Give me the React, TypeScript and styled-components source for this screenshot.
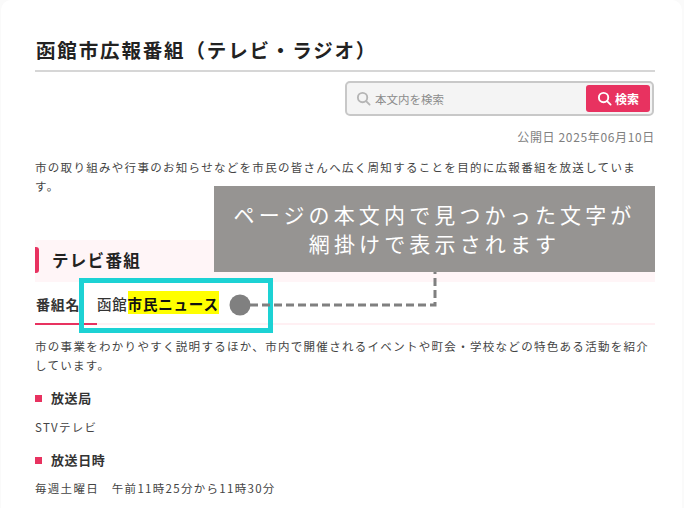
import React from 'react';
import styled, { createGlobalStyle } from 'styled-components';

const GlobalStyle = createGlobalStyle`
  html, body { margin: 0; padding: 0; background: #fafafa; }
  body {
    width: 684px;
    height: 508px;
    overflow: hidden;
    font-family: "Noto Sans CJK JP", "Noto Sans", sans-serif;
    color: #333;
  }
`;

const Stage = styled.div`
  position: relative;
  width: 684px;
  height: 508px;
  overflow: hidden;
`;

const Card = styled.main`
  box-sizing: border-box;
  width: 681px;
  height: 520px;
  margin-left: 1px;
  padding: 35px 27px 0 34px;
  background: #fff;
  border-radius: 10px 10px 0 0;
`;

const PageTitle = styled.h1`
  margin: 0;
  height: 35px;
  padding-left: 1px;
  border-bottom: 2px solid #d6d6d6;
  font-size: 19.5px;
  line-height: 30px;
  font-weight: 700;
  letter-spacing: 1.85px;
  color: #222;
`;

const SearchBox = styled.form`
  box-sizing: border-box;
  display: flex;
  align-items: center;
  width: 309px;
  height: 35px;
  margin: 9px 1px 0 auto;
  padding: 0 2px 0 9px;
  background: #f4f4f4;
  border: 2px solid #c8c8c8;
  border-radius: 5px;
`;

const SearchHint = styled.span`
  flex: 1;
  margin-left: 4px;
  font-size: 11.5px;
  color: #8c8c8c;
`;

const SearchButton = styled.button`
  display: flex;
  align-items: center;
  justify-content: center;
  gap: 3px;
  width: 64px;
  height: 27px;
  padding: 0;
  border: 0;
  border-radius: 3px;
  background: #e83260;
  color: #fff;
  font: 700 12px "Noto Sans CJK JP", sans-serif;
`;

const PublishDate = styled.p`
  margin: 12px 0 0;
  text-align: right;
  font-size: 12px;
  line-height: 17px;
  letter-spacing: 0.65px;
  color: #808080;
`;

const Paragraph = styled.p<{ $top: number }>`
  margin: ${(p) => p.$top}px 0 0;
  font-size: 11.5px;
  line-height: 19px;
  letter-spacing: 1.3px;
  color: #444;
`;

const SectionHeading = styled.h2`
  box-sizing: border-box;
  display: flex;
  align-items: center;
  height: 42px;
  margin: 44px 0 0;
  padding: 0 0 2px 17px;
  background: #fff5f7;
  font-size: 16.5px;
  font-weight: 700;
  letter-spacing: 1.3px;
  color: #222;
  position: relative;
  &::before {
    content: '';
    position: absolute;
    left: 0;
    top: 7px;
    width: 4px;
    height: 26px;
    border-radius: 0 3px 3px 0;
    background: #e83260;
  }
`;

const ProgramRow = styled.div`
  display: flex;
  align-items: center;
  height: 41px;
  border-bottom: 2px solid #fff0f3;
`;

const RowLabel = styled.strong`
  box-sizing: border-box;
  width: 62px;
  height: 43px;
  margin-bottom: -2px;
  padding: 13px 0 0 1px;
  border-bottom: 2px solid #e83260;
  font-size: 14px;
  line-height: 18px;
  font-weight: 700;
  letter-spacing: 0.7px;
  color: #333;
`;

const RowValue = styled.span`
  margin-top: -1px;
  font-size: 14.5px;
  line-height: 21px;
  font-weight: 500;
  letter-spacing: 0.8px;
  color: #333;
`;

const Highlight = styled.mark`
  display: inline-block;
  padding-top: 2px;
  background: #ffff00;
  color: #111;
  font-weight: 700;
  letter-spacing: 0.8px;
`;

const SubHeading = styled.h3<{ $top: number }>`
  display: flex;
  align-items: center;
  gap: 9px;
  margin: ${(p) => p.$top}px 0 0;
  font-size: 13px;
  line-height: 18px;
  font-weight: 700;
  letter-spacing: 0.6px;
  color: #333;
  &::before {
    content: '';
    width: 7px;
    height: 7px;
    background: #e83260;
  }
`;

const Callout = styled.div`
  position: absolute;
  left: 214px;
  top: 186px;
  width: 441px;
  height: 86px;
  display: flex;
  align-items: center;
  justify-content: center;
  text-align: center;
  background: #969492;
  color: #fff;
  font-size: 21px;
  line-height: 29px;
  font-weight: 400;
  letter-spacing: 4.15px;
`;

const FocusFrame = styled.div`
  position: absolute;
  left: 79px;
  top: 278px;
  width: 184px;
  height: 45px;
  border: 5px solid #1dd2d4;
`;

const Leader = styled.svg`
  position: absolute;
  left: 225px;
  top: 270px;
`;

const SearchIcon = ({ size, color }: { size: number; color: string }) => (
  <svg width={size} height={size} viewBox="0 0 16 16" fill="none" stroke={color} strokeWidth="2">
    <circle cx="7" cy="7" r="5" />
    <path d="M11 11l3.5 3.5" strokeLinecap="round" />
  </svg>
);

const App: React.FC = () => (
  <Stage>
    <GlobalStyle />
    <Card>
      <PageTitle>函館市広報番組（テレビ・ラジオ）</PageTitle>
      <SearchBox>
        <SearchIcon size={15} color="#b5b5b5" />
        <SearchHint>本文内を検索</SearchHint>
        <SearchButton type="button">
          <SearchIcon size={15} color="#fff" />
          検索
        </SearchButton>
      </SearchBox>
      <PublishDate>公開日 2025年06月10日</PublishDate>
      <Paragraph $top={13}>
        市の取り組みや行事のお知らせなどを市民の皆さんへ広く周知することを目的に広報番組を放送しています。
      </Paragraph>
      <SectionHeading>テレビ番組</SectionHeading>
      <ProgramRow>
        <RowLabel>番組名</RowLabel>
        <RowValue>
          函館<Highlight>市民ニュース</Highlight>
        </RowValue>
      </ProgramRow>
      <Paragraph $top={12}>
        市の事業をわかりやすく説明するほか、市内で開催されるイベントや町会・学校などの特色ある活動を紹介しています。
      </Paragraph>
      <SubHeading $top={14}>放送局</SubHeading>
      <Paragraph $top={11}>STVテレビ</Paragraph>
      <SubHeading $top={14}>放送日時</SubHeading>
      <Paragraph $top={10}>毎週土曜日　午前11時25分から11時30分</Paragraph>
    </Card>
    <Callout>
      ページの本文内で見つかった文字が
      <br />
      網掛けで表示されます
    </Callout>
    <FocusFrame />
    <Leader width="220" height="50" viewBox="0 0 220 50" fill="none">
      <path d="M25 35H210V2" stroke="#808080" strokeWidth="3" strokeDasharray="8 4" />
      <circle cx="15" cy="35" r="10.5" fill="#808080" />
    </Leader>
  </Stage>
);

export default App;
